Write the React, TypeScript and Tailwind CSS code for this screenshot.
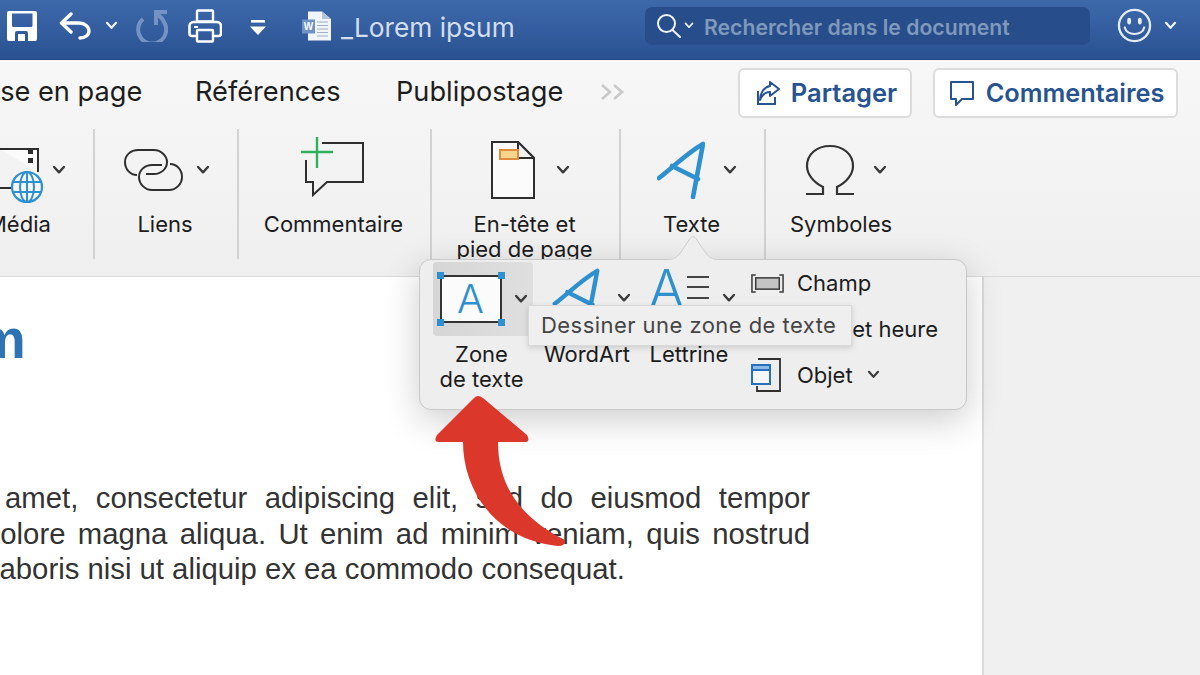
import React from "react";

const Chev = ({ c = "#3a3a3a", w = 14 }: { c?: string; w?: number }) => (
  <svg width={w} height={w * 0.7} viewBox="0 0 14 10" fill="none" className="shrink-0">
    <path d="M2 2 L7 7.5 L12 2" stroke={c} strokeWidth="2.4" strokeLinecap="round" strokeLinejoin="round" />
  </svg>
);

const Sep = () => <div className="w-[2px] h-[130px] bg-[#d2d2d2] shrink-0" />;

const Group = ({ width, pad, label, children, label2 }: { width: string; pad: string; label: string; label2?: string; children: React.ReactNode }) => (
  <div className={`flex flex-col shrink-0 ${width}`}>
    <div className={`h-[82px] flex items-center shrink-0 ${pad}`}>{children}</div>
    <div className="mt-[1px] pr-[2px] text-[22px] leading-[25px] text-[#1c1c1c] text-center whitespace-nowrap">
      {label}
      {label2 && <br />}
      {label2}
    </div>
  </div>
);

const SlantA = ({ w, h }: { w: number; h: number }) => (
  <svg width={w} height={h} viewBox="0 0 48 58" fill="none" className="shrink-0">
    <path d="M2 37 C14 28 30 12 46 3 L36 56 M15 25 L41 38" stroke="#2e90cf" strokeWidth="4.6" strokeLinejoin="round" strokeLinecap="round" />
  </svg>
);

export default function App() {
  return (
    <div className="relative w-[1200px] h-[675px] overflow-hidden flex flex-col bg-[#f0f0f0] font-['Inter','Liberation_Sans',sans-serif]">
      {/* Title bar */}
      <div className="h-[60px] shrink-0 flex items-center bg-gradient-to-b from-[#3d69ab] to-[#2a5292] border-b border-[#24467e] pb-[8px]">
        <div className="w-[645px] shrink-0 flex items-center pl-[7px]">
          <svg width="30" height="30" viewBox="7 11 30 30" className="shrink-0">
            <path fillRule="evenodd" d="M9 11 H35 a2 2 0 0 1 2 2 V39 a2 2 0 0 1 -2 2 H9 a2 2 0 0 1 -2 -2 V13 a2 2 0 0 1 2 -2 Z M12 13.5 V25.5 a1.5 1.5 0 0 0 1.5 1.5 H31 a1.5 1.5 0 0 0 1.5 -1.5 V13.5 Z M15 41 V33 a2 2 0 0 1 2 -2 H26 a2 2 0 0 1 2 2 V41 H25 V34 H18 V41 Z" fill="#fff" />
          </svg>
          <svg width="32" height="28" viewBox="59 12 32 28" fill="none" className="ml-[22px] shrink-0">
            <path d="M71 14 L61.5 23 L71 32 M62 23 H79 C85 23 89 27 89 31 C89 35 85 38 80 38" stroke="#fff" strokeWidth="3.4" strokeLinecap="round" strokeLinejoin="round" />
          </svg>
          <div className="ml-[14px]"><Chev c="#eef2f8" w={13} /></div>
          <svg width="32" height="32" viewBox="136 11 32 32" fill="none" className="ml-[18px] shrink-0">
            <path d="M143 20 A14 14 0 1 0 164.5 24 C163 20 160 17 156 14.5 M156 26 V13 H167" stroke="#7393c4" strokeWidth="4" />
          </svg>
          <svg width="34" height="34" viewBox="188 9 34 34" fill="none" className="ml-[20px] shrink-0">
            <rect x="197" y="10.5" width="16" height="11" rx="1" stroke="#fff" strokeWidth="2.4" />
            <path d="M197 36 H192 a2.5 2.5 0 0 1 -2.5 -2.5 V26 a4 4 0 0 1 4 -4 H217 a4 4 0 0 1 4 4 V33.5 a2.5 2.5 0 0 1 -2.5 2.5 H213" stroke="#fff" strokeWidth="2.6" />
            <rect x="197" y="30" width="16" height="11.5" rx="1" stroke="#fff" strokeWidth="2.4" />
            <path d="M194 27 H198" stroke="#fff" strokeWidth="2" />
          </svg>
          <svg width="16" height="15" viewBox="0 0 16 15" className="ml-[28px] shrink-0 mt-[3px]">
            <rect x="1" y="0" width="14" height="2.6" fill="#fff" />
            <path d="M0 6.5 H16 L8 15 Z" fill="#fff" />
          </svg>
          <svg width="30" height="30" viewBox="0 0 30 30" className="ml-[36px] shrink-0">
            <path d="M6 0.5 H20 L29 8 V29.5 H6 Z" fill="#f2f5fa" />
            <path d="M20 0.5 L29 8 H20 Z" fill="#b6c4d9" />
            <path d="M15 11 H26 M15 14.5 H26 M15 18 H26 M15 21.5 H26 M15 25 H26" stroke="#9fb0c8" strokeWidth="1.2" />
            <rect x="0" y="8.5" width="13" height="14" fill="#6f93c8" />
            <text x="6.5" y="19" fontSize="10" fontWeight="700" fill="#fff" textAnchor="middle" fontFamily="Liberation Sans">W</text>
          </svg>
          <span className="ml-[9px] mt-[6px] text-[26.3px] leading-none text-[#d3deee] whitespace-nowrap">_Lorem ipsum</span>
        </div>
        <div className="w-[445px] h-[38px] shrink-0 rounded-[7px] bg-[#274e8a] flex items-center pl-[12px]">
          <svg width="25" height="24" viewBox="0 0 25 24" fill="none" className="shrink-0">
            <circle cx="9.5" cy="9.5" r="8.5" stroke="#f0f4fa" strokeWidth="2" />
            <path d="M15.5 16 L23 23" stroke="#f0f4fa" strokeWidth="2" strokeLinecap="round" />
          </svg>
          <div className="ml-[2px]"><Chev c="#f0f4fa" w={10} /></div>
          <span className="ml-[10px] mt-[4px] text-[21.2px] font-semibold text-[#7f99bd] whitespace-nowrap">Rechercher dans le document</span>
        </div>
        <svg width="35" height="35" viewBox="0 0 36 36" fill="none" className="ml-[27px] shrink-0">
          <circle cx="18" cy="18" r="16" stroke="#e6ecf5" strokeWidth="2.4" />
          <ellipse cx="12.5" cy="13.5" rx="2" ry="3.4" fill="#e6ecf5" />
          <ellipse cx="23.5" cy="13.5" rx="2" ry="3.4" fill="#e6ecf5" />
          <path d="M8 20 C10 29 26 29 28 20" stroke="#e6ecf5" strokeWidth="2.2" strokeLinecap="round" />
        </svg>
        <div className="ml-[12px]"><Chev c="#f0f4fa" w={13} /></div>
      </div>

      <div className="bg-gradient-to-b from-[#f7f7f7] to-[#efefef] shrink-0">
        {/* Tabs */}
        <div className="h-[69px] flex items-center">
          <div className="ml-[-31px] text-[27.2px] text-[#1d1d1d] whitespace-nowrap w-[226px] mt-[-4px]">Mise en page</div>
          <div className="text-[27.2px] text-[#1d1d1d] whitespace-nowrap w-[201px] mt-[-4px]">Références</div>
          <div className="text-[27.2px] text-[#1d1d1d] whitespace-nowrap w-[204px] mt-[-4px]">Publipostage</div>
          <svg width="26" height="18" viewBox="0 0 26 18" fill="none" className="shrink-0 mt-[-6px]">
            <path d="M2 2 L10 9 L2 16 M14 2 L22 9 L14 16" stroke="#c9c9c9" strokeWidth="2.6" />
          </svg>
          <button className="ml-[112px] w-[174px] h-[50px] rounded-[6px] bg-white border-2 border-[#dcdcdc] flex items-center justify-center gap-[10px] pl-[2px] text-[25.5px] font-semibold text-[#27538f] shrink-0 mt-[-3px]">
            <svg width="26" height="26" viewBox="0 0 26 26" fill="none">
              <path d="M3 11 V24 H20 V17" stroke="#27538f" strokeWidth="2" />
              <path d="M15 2 L24 9 L15 16 V12 C10 12 7 15 5 20 C5 13 9 7 15 6 Z" stroke="#27538f" strokeWidth="2" strokeLinejoin="round" />
            </svg>
            Partager
          </button>
          <button className="ml-[21px] w-[245px] h-[50px] rounded-[6px] bg-white border-2 border-[#dcdcdc] flex items-center justify-center gap-[11px] pl-[2px] text-[25.3px] font-semibold text-[#27538f] shrink-0 mt-[-3px]">
            <svg width="26" height="26" viewBox="0 0 26 26" fill="none">
              <path d="M2 2 H24 V19 H13 L7 25 V19 H2 Z" stroke="#27538f" strokeWidth="2" strokeLinejoin="round" />
            </svg>
            Commentaires
          </button>
        </div>

        {/* Ribbon */}
        <div className="h-[148px] flex items-start border-b border-[#dcdcdc]">
          {/* Média */}
          <div className="w-[93px] shrink-0 overflow-hidden">
            <div className="h-[82px] flex items-center">
              <svg width="44" height="58" viewBox="0 147 44 58" fill="none" className="shrink-0 mt-[12px]">
                <path d="M0 149 H38 V172" stroke="#2d2d2d" strokeWidth="2" fill="#fbfbfb" />
                <rect x="28" y="150" width="5" height="4" fill="#2d2d2d" />
                <rect x="28" y="158" width="5" height="5" fill="#2d2d2d" />
                <path d="M0 188 H12" stroke="#2d2d2d" strokeWidth="2" />
                <circle cx="27" cy="187" r="15" fill="#f5f5f5" stroke="#2e90cf" strokeWidth="2.2" />
                <ellipse cx="27" cy="187" rx="7" ry="15" stroke="#2e90cf" strokeWidth="2" />
                <path d="M12.5 182 H41.5 M12.5 192 H41.5 M27 172 V202" stroke="#2e90cf" strokeWidth="2" />
              </svg>
              <div className="ml-[8px]"><Chev /></div>
            </div>
            <div className="mt-[1px] text-[22px] leading-[25px] text-[#1c1c1c] ml-[-13px] whitespace-nowrap">Média</div>
          </div>
          <Sep />
          <Group width="w-[142px]" pad="pl-[29px]" label="Liens">
            <svg width="60" height="42" viewBox="124 149 60 42" fill="none" className="shrink-0">
              <path d="M137 175 C130 175 125 169 125 162 C125 155 131 150 138 150 H154 C161 150 167 156 167 162 C167 169 161 174 154 174 H146" stroke="#2f2f2f" strokeWidth="2" />
              <path d="M170 164 C177 164 182 170 182 177 C182 184 176 190 169 190 H152 C145 190 139 184 139 177 C139 170 145 165 152 165 H162" stroke="#2f2f2f" strokeWidth="2" />
            </svg>
            <div className="ml-[12px]"><Chev /></div>
          </Group>
          <Sep />
          <Group width="w-[191px]" pad="pl-[62px]" label="Commentaire">
            <svg width="63" height="60" viewBox="301 137 63 60" fill="none" className="shrink-0 mt-[-6px]">
              <path d="M306 160 V182 H313 V195 L327 182 H363 V143 H322" stroke="#2f2f2f" strokeWidth="2" />
              <path d="M317 137 V168 M301 152 H333" stroke="#2fb05c" strokeWidth="2.4" />
            </svg>
          </Group>
          <Sep />
          <Group width="w-[187px]" pad="pl-[59px]" label="En-tête et" label2="pied de page">
            <svg width="44" height="58" viewBox="0 0 44 58" fill="none" className="shrink-0">
              <path d="M1 1 H27 L43 17 V57 H1 Z" fill="#fbfbfb" stroke="#2f2f2f" strokeWidth="2" />
              <path d="M27 1 V17 H43 Z" stroke="#2f2f2f" strokeWidth="2" fill="#f2f2f2" />
              <rect x="9" y="9" width="18" height="9" fill="#f6d68c" stroke="#e28a3c" strokeWidth="2" />
            </svg>
            <div className="ml-[21px]"><Chev /></div>
          </Group>
          <Sep />
          <Group width="w-[143px]" pad="pl-[36px]" label="Texte">
            <SlantA w={48} h={58} />
            <div className="ml-[18px]"><Chev /></div>
          </Group>
          <Sep />
          <Group width="w-[152px]" pad="pl-[39px]" label="Symboles">
            <svg width="50" height="52" viewBox="0 0 50 52" fill="none" className="shrink-0">
              <path d="M1 50 H18 V43 C8 38 2 30 2 22 C2 10 12 2 25 2 C38 2 48 10 48 22 C48 30 42 38 32 43 V50 H49" stroke="#333" strokeWidth="2.2" />
            </svg>
            <div className="ml-[18px]"><Chev /></div>
          </Group>
        </div>
      </div>

      {/* Document */}
      <div className="flex-1 flex min-h-0">
        <div className="w-[984px] shrink-0 bg-white overflow-hidden border-r-2 border-[#dadada]">
          <div className="text-[56px] leading-[60px] font-bold text-[#2e74b5] font-['Liberation_Sans',sans-serif] mt-[32px] ml-[-24px]">m</div>
          <div className="mt-[111px] w-[810px] text-[29.3px] leading-[35.7px] text-[#333] font-['Liberation_Sans',sans-serif]">
            <div className="ml-[5px] [text-align-last:justify]">amet, consectetur adipiscing elit, sed do eiusmod tempor</div>
            <div className="ml-[-16px] [text-align-last:justify]">dolore magna aliqua. Ut enim ad minim veniam, quis nostrud</div>
            <div className="ml-[-7px] whitespace-nowrap">laboris nisi ut aliquip ex ea commodo consequat.</div>
          </div>
        </div>
        <div className="flex-1 bg-[#f0f0f0]" />
      </div>

      {/* Popover */}
      <div className="absolute left-[419px] top-[259px] w-[548px] h-[151px] rounded-[12px] bg-[#eeeeee] border border-[#c9c9c9] shadow-[0_10px_36px_rgba(0,0,0,0.2)] flex pl-[12px] pt-[2px]">
        <svg width="72" height="27" viewBox="0 0 72 27" className="absolute left-[237px] top-[-26px]" fill="none">
          <path d="M0 26.5 C16 26.5 20 24 24 18 L32 6 C35 1.5 37 1.5 40 6 L48 18 C52 24 56 26.5 72 26.5" fill="#eeeeee" stroke="#cfcfcf" />
          <rect x="0" y="26" width="72" height="2" fill="#eeeeee" />
        </svg>
        <div className="w-[101px] shrink-0 flex flex-col items-center">
          <div className="w-[100px] h-[74px] shrink-0 rounded-[4px] bg-gradient-to-r from-[#d6d6d6] to-[#dfdfdf] flex items-center pl-[7px]">
            <div className="relative w-[62px] h-[48px] shrink-0 bg-[#fbfbfb] border-2 border-[#333] flex items-center justify-center text-[40px] font-light leading-none text-[#2e90cf]">
              A
              <div className="absolute left-[-5px] top-[-5px] w-[7px] h-[7px] bg-[#2e90cf]" />
              <div className="absolute right-[-5px] top-[-5px] w-[7px] h-[7px] bg-[#2e90cf]" />
              <div className="absolute left-[-5px] bottom-[-5px] w-[7px] h-[7px] bg-[#2e90cf]" />
              <div className="absolute right-[-5px] bottom-[-5px] w-[7px] h-[7px] bg-[#2e90cf]" />
            </div>
            <div className="ml-[12px]"><Chev /></div>
          </div>
          <div className="text-[22px] leading-[25px] text-[#1c1c1c] text-center mt-[6px] pr-[2px] whitespace-nowrap">Zone<br />de texte</div>
        </div>
        <div className="w-[108px] shrink-0 flex flex-col items-center">
          <div className="w-full h-[74px] shrink-0 flex items-center pl-[19px]">
            <div className="mt-[-6px]"><SlantA w={48} h={56} /></div>
            <div className="ml-[17px] mt-[-2px]"><Chev /></div>
          </div>
          <div className="text-[22px] leading-[25px] text-[#1c1c1c] mt-[6px] whitespace-nowrap">WordArt</div>
        </div>
        <div className="w-[96px] shrink-0 flex flex-col items-center">
          <div className="w-full h-[74px] shrink-0 flex items-center pl-[8px]">
            <div className="text-[52px] font-light leading-none text-[#2e90cf] mt-[-20px]">A</div>
            <div className="ml-[3px] flex flex-col gap-[8.5px] w-[22px] shrink-0 mt-[-24px]">
              <div className="h-[2px] bg-[#444]" />
              <div className="h-[2px] bg-[#444]" />
              <div className="h-[2px] bg-[#444]" />
            </div>
            <div className="ml-[13px] mt-[-2px]"><Chev /></div>
          </div>
          <div className="text-[22px] leading-[25px] text-[#1c1c1c] mt-[6px] whitespace-nowrap">Lettrine</div>
        </div>
        <div className="ml-[14px] flex flex-col text-[22px] leading-[25px] text-[#1c1c1c] w-[200px] pt-[6px]">
          <div className="flex items-center h-[30px] gap-[13px]">
            <svg width="33" height="19" viewBox="0 0 35 20" fill="none" className="shrink-0">
              <path d="M5 1 H1 V19 H5 M30 1 H34 V19 H30" stroke="#3a3a3a" strokeWidth="1.6" />
              <rect x="5" y="4" width="25" height="12" fill="#c4c4c4" stroke="#3a3a3a" strokeWidth="1.6" />
            </svg>
            <span>Champ</span>
          </div>
          <div className="flex items-center h-[46px] pl-[47px] mt-[8px] whitespace-nowrap">Date et heure</div>
          <div className="flex items-center h-[36px] gap-[17px] mt-[5px]">
            <svg width="30" height="34" viewBox="0 0 30 34" fill="none" className="shrink-0">
              <path d="M7 1 H29 V33 H6 V28" stroke="#2f2f2f" strokeWidth="1.8" />
              <rect x="1" y="7" width="18" height="19" fill="#f7f7f7" stroke="#2571bd" strokeWidth="2" />
              <rect x="1" y="7" width="18" height="5" fill="#8db9e4" stroke="#2571bd" strokeWidth="2" />
            </svg>
            <span className="ml-[-1px]">Objet</span>
            <div className="ml-[-3px]"><Chev w={13} /></div>
          </div>
        </div>
        {/* Tooltip */}
        <div className="absolute left-[108px] top-[45px] w-[324px] h-[41px] bg-[#efefef] border border-[#d9d9d9] shadow-[0_2px_6px_rgba(0,0,0,0.14)] flex items-center pl-[12px] text-[22px] tracking-[0.45px] text-[#454545] whitespace-nowrap">
          Dessiner une zone de texte
        </div>
      </div>

      {/* Red arrow */}
      <svg width="1200" height="675" viewBox="0 0 1200 675" className="absolute left-0 top-0 pointer-events-none" fill="none">
        <path d="M478 396 Q476 396 474 398 L437 435 Q433 442 439 442 L463 442 C463 490 495 540 558 546 Q566 546 565 540 C525 520 498 490 498 442 L524 442 Q531 442 527 435 L483 398 Q480 396 478 396 Z" fill="#db372b" />
      </svg>
    </div>
  );
}
